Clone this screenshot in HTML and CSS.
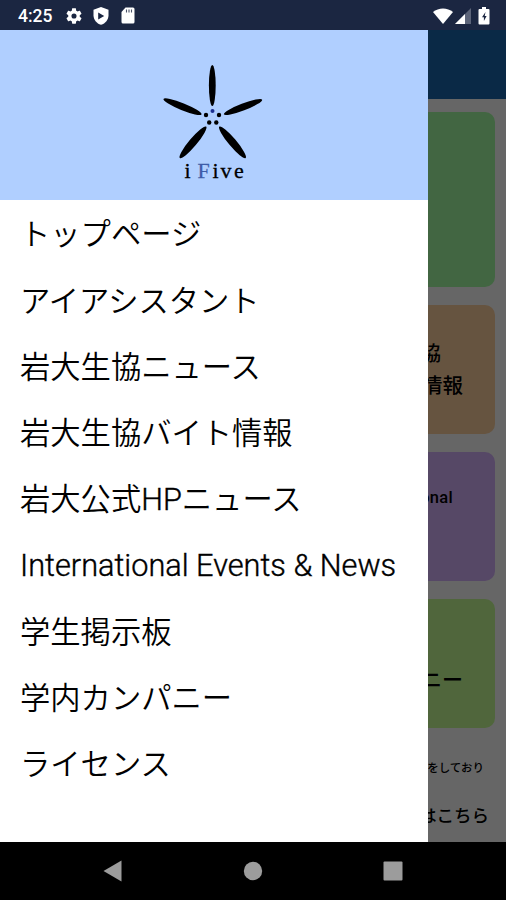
FILE: index.html
```html
<!DOCTYPE html>
<html lang="ja">
<head>
    <meta charset="UTF-8">
    <meta name="viewport" content="width=device-width, initial-scale=1.0">
    <title>iFive</title>
    <link rel="stylesheet" href="styles.css">
</head>
<body>
    <header class="status-bar">
        <span class="clock">4:25</span>
        <svg class="icon-gear" viewBox="2 2 20 20" width="16" height="16"><path fill="#fff" d="M19.14 12.94c.04-.3.06-.61.06-.94s-.02-.64-.07-.94l2.03-1.58c.18-.14.23-.41.12-.61l-1.92-3.32c-.12-.22-.37-.29-.59-.22l-2.39.96c-.5-.38-1.03-.7-1.62-.94l-.36-2.54c-.04-.24-.24-.41-.48-.41h-3.84c-.24 0-.43.17-.47.41l-.36 2.54c-.59.24-1.13.57-1.62.94l-2.39-.96c-.22-.08-.47 0-.59.22L2.74 8.87c-.12.21-.08.47.12.61l2.03 1.58c-.05.3-.09.63-.09.94s.02.64.07.94l-2.03 1.58c-.18.14-.23.41-.12.61l1.92 3.32c.12.22.37.29.59.22l2.39-.96c.5.38 1.03.7 1.62.94l.36 2.54c.05.24.24.41.48.41h3.84c.24 0 .44-.17.47-.41l.36-2.54c.59-.24 1.13-.56 1.62-.94l2.39.96c.22.08.47 0 .59-.22l1.92-3.32c.12-.22.07-.47-.12-.61zM12 15.2A3.200 3.200 0 1 1 12 8.800a3.200 3.200 0 0 1 0 6.400z"/></svg>
        <svg class="icon-shield" viewBox="0 0 16 18" width="16" height="18"><path fill="#fff" d="M8 0l7.500 2.800v5.400c0 4.400-3 8.200-7.500 9.600C3.500 16.400.5 12.600.5 8.200V2.800z"/><path fill="#1b2641" d="M5.200 5.500l6 3.500-6 3.500z"/></svg>
        <svg class="icon-sd" viewBox="0 0 14 17" width="14" height="17"><path fill="#fff" d="M4.500.5H12A1.500 1.500 0 0 1 13.500 2v13a1.500 1.500 0 0 1-1.500 1.500H2A1.500 1.500 0 0 1 .5 15V5z"/><path stroke="#4a5268" stroke-width="1.100" d="M5.500 2.500v3M8 2.500v3M10.500 2.500v3"/></svg>
        <div class="status-right">
            <svg class="icon-wifi" viewBox="0 0 20 16" width="20" height="16"><path fill="#fff" d="M10 16L0 4C5.500-.8 14.500-.8 20 4z"/></svg>
            <svg class="icon-signal" viewBox="0 0 16 16" width="16" height="16"><path fill="#5c6479" d="M16 0v16H0z"/><path fill="#fff" d="M10 6v10H0z"/></svg>
            <svg class="icon-battery" viewBox="0 0 12 18" width="12" height="18"><path fill="#fff" d="M4 0h4v2h2.500q1 0 1 1v13.500q0 1-1 1h-9q-1 0-1-1V3q0-1 1-1H4z"/><path fill="#1b2641" d="M7.500 5L4 10.300h1.900V14l2.700-5H6.700z"/></svg>
        </div>
    </header>

    <div class="screen">
        <main class="home">
            <div class="app-bar"></div>
            <div class="cards">
                <div class="card card-green"></div>
                <div class="card card-orange">
                    <p class="coop">岩大生協</p>
                    <p class="baito">バイト情報</p>
                </div>
                <div class="card card-purple">
                    <p class="events">International</p>
                </div>
                <div class="card card-lime">
                    <p class="company">カンパニー</p>
                </div>
            </div>
            <p class="notice">をしており</p>
            <p class="contact">はこちら</p>
        </main>
        <div class="scrim"></div>

        <nav class="drawer">
            <div class="drawer-header">
                <svg class="logo" viewBox="0 0 130 135" width="130" height="135">
                    <ellipse cx="62.300" cy="30.500" rx="3.400" ry="20.500"/>
                    <ellipse cx="32.500" cy="51.700" rx="3.500" ry="20.500" transform="rotate(-68 32.500 51.700)"/>
                    <ellipse cx="93" cy="52" rx="3.500" ry="20.500" transform="rotate(69 93 52)"/>
                    <ellipse cx="43" cy="87.300" rx="3.900" ry="20.500" transform="rotate(40 43 87.300)"/>
                    <ellipse cx="82.500" cy="87.300" rx="3.900" ry="20.500" transform="rotate(-40 82.500 87.300)"/>
                    <circle cx="62.500" cy="56" r="2" fill="#1c2f91"/>
                    <circle cx="56" cy="60" r="2.200"/>
                    <circle cx="69" cy="60" r="2.200"/>
                    <circle cx="59.200" cy="67.500" r="2.200"/>
                    <circle cx="66.300" cy="67.500" r="2.200"/>
                    <text class="logo-text" y="122.500"><tspan x="34.500">i</tspan><tspan class="logo-f" x="47.500">F</tspan><tspan x="62.500">i</tspan><tspan x="70.500">v</tspan><tspan x="84">e</tspan></text>
                </svg>
            </div>
            <ul class="menu">
                <li>トップページ</li>
                <li>アイアシスタント</li>
                <li>岩大生協ニュース</li>
                <li>岩大生協バイト情報</li>
                <li>岩大公式<span class="latin">HP</span>ニュース</li>
                <li><span class="latin">International Events &amp; News</span></li>
                <li>学生掲示板</li>
                <li>学内カンパニー</li>
                <li>ライセンス</li>
            </ul>
        </nav>
    </div>

    <footer class="nav-bar">
        <svg viewBox="0 0 20 22" width="20" height="22"><path fill="#9c9c9c" d="M18.500.5v21L.5 11z"/></svg>
        <svg viewBox="0 0 20 20" width="20" height="20"><circle cx="10" cy="10" r="9.200" fill="#9c9c9c"/></svg>
        <svg viewBox="0 0 20 20" width="20" height="20"><rect x=".5" y=".5" width="19" height="19" rx="1" fill="#9c9c9c"/></svg>
    </footer>
</body>
</html>
```
FILE: styles.css
```css
* {
    box-sizing: border-box;
}

body {
    margin: 0;
    height: 900px;
    display: flex;
    flex-direction: column;
    overflow: hidden;
    background-color: #000;
    color: #000;
    font-family: Roboto, "Noto Sans CJK JP", sans-serif;
}

p {
    margin: 0;
}

.status-bar {
    height: 30px;
    display: flex;
    align-items: center;
    padding: 1px 16px 0 18px;
    background-color: #1b2641;
    color: #fff;
}

.clock {
    width: 48px;
    font-size: 17.5px;
    font-weight: 500;
}

.icon-shield {
    margin-left: 11px;
}

.icon-sd {
    margin-left: 12px;
}

.status-right {
    display: flex;
    align-items: center;
    margin-left: auto;
}

.icon-signal {
    margin-left: 2px;
}

.icon-battery {
    margin-left: 7px;
}

.screen {
    position: relative;
    height: 812px;
    overflow: hidden;
}

/* Home page under the open drawer */
.home {
    height: 100%;
    background-color: #fff;
    text-align: right;
    white-space: nowrap;
}

.app-bar {
    height: 69px;
    background-color: #1a66af;
}

.cards {
    display: flex;
    flex-direction: column;
    gap: 18px;
    padding: 13px 11px 0;
}

.card {
    height: 129px;
    border-radius: 10px;
    font-weight: 500;
}

.card-green {
    height: 175px;
    background-color: #a5ffa5;
}

.card-orange {
    padding: 33px 32px 0 0;
    background-color: #ffd2a0;
    font-size: 20.5px;
    line-height: 32px;
}

.coop {
    padding-right: 22px;
}

.card-purple {
    padding: 34px 42px 0 0;
    background-color: #d7b4ff;
    font-size: 16.5px;
    line-height: 24px;
}

.events {
    letter-spacing: 0.3px;
}

.card-lime {
    padding: 66px 32px 0 0;
    background-color: #c8ff96;
    font-size: 21px;
    line-height: 30px;
}

.notice {
    padding: 31px 22px 0 0;
    font-size: 11.5px;
    line-height: 18px;
    font-weight: 500;
}

.contact {
    padding: 26px 17px 0 0;
    font-size: 17.5px;
    line-height: 26px;
    font-weight: 500;
}

.scrim {
    position: absolute;
    inset: 0;
    background-color: rgba(0, 0, 0, 0.6);
}

.drawer {
    position: absolute;
    top: 0;
    left: 0;
    width: 428px;
    height: 100%;
    background-color: #fff;
}

.drawer-header {
    height: 170px;
    display: flex;
    justify-content: center;
    padding: 25px 0 0 2px;
    background-color: #b0cfff;
}

.logo-text {
    font-family: "Liberation Serif", serif;
    font-size: 22px;
    stroke: #000;
    stroke-width: 0.3px;
}

.logo-f {
    fill: #3e5ca8;
    stroke: #3e5ca8;
}

.menu {
    margin: 0;
    padding: 2.4px 20px 0;
    list-style: none;
    font-size: 30.3px;
    font-weight: 350;
}

.menu li {
    height: 66.2px;
    line-height: 66px;
    white-space: nowrap;
}

.menu .latin {
    font-size: 30.7px;
    -webkit-text-stroke: 0.4px #000;
}

/* Android navigation buttons */
.nav-bar {
    height: 58px;
    display: flex;
    justify-content: space-between;
    align-items: center;
    padding: 0 103px 0 103px;
    background-color: #000;
}
```
